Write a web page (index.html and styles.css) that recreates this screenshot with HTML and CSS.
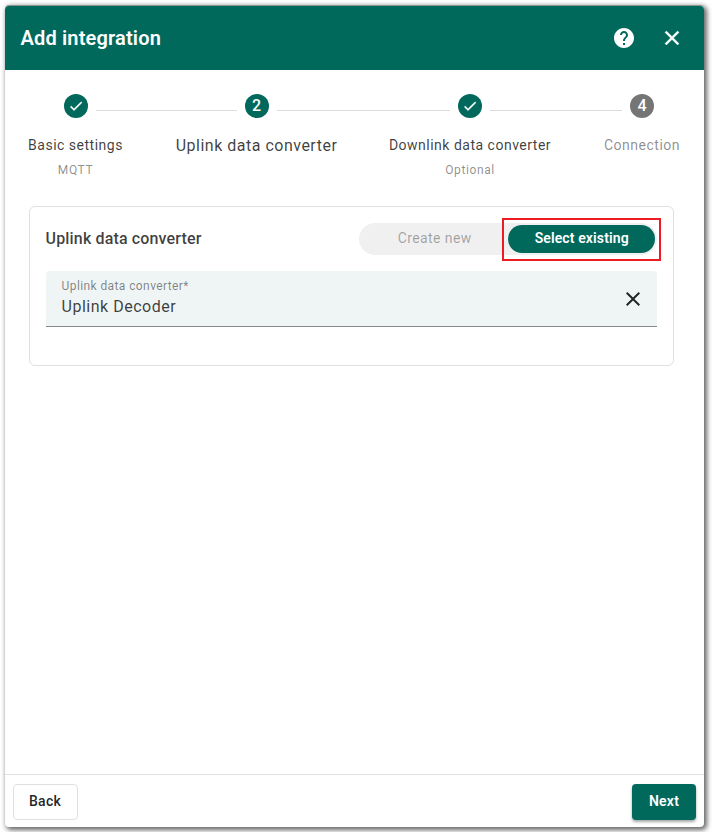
FILE: index.html
```html
<!DOCTYPE html>
<html lang="en">
<head>
<meta charset="utf-8">
<title>Add integration</title>
<link rel="stylesheet" href="styles.css">
</head>
<body>
<main class="dialog">
  <header class="toolbar">
    <h1 class="title">Add integration</h1>
    <svg class="icon help" viewBox="0 0 24 24"><path d="M12 2C6.48 2 2 6.48 2 12s4.48 10 10 10 10-4.48 10-10S17.52 2 12 2zm1 17h-2v-2h2v2zm2.07-7.75l-.9.92C13.45 12.9 13 13.5 13 15h-2v-.5c0-1.1.45-2.1 1.17-2.83l1.24-1.26c.37-.36.59-.86.59-1.41 0-1.1-.9-2-2-2s-2 .9-2 2H8c0-2.21 1.79-4 4-4s4 1.79 4 4c0 .88-.36 1.68-.93 2.25z"/></svg>
    <svg class="icon close" viewBox="0 0 24 24"><path d="M19 6.41L17.59 5 12 10.59 6.41 5 5 6.41 10.59 12 5 17.59 6.41 19 12 13.41 17.59 19 19 17.59 13.41 12z"/></svg>
  </header>
  <section class="content">
    <div class="stepper">
      <div class="step">
        <span class="dot"><svg viewBox="0 0 24 24"><path d="M9 16.17L4.83 12l-1.42 1.41L9 19 21 7l-1.41-1.41z"/></svg></span>
        <span class="label">Basic settings</span>
        <span class="hint">MQTT</span>
      </div>
      <i class="line line-first"></i>
      <div class="step">
        <span class="dot">2</span>
        <span class="label label-active">Uplink data converter</span>
      </div>
      <i class="line line-second"></i>
      <div class="step">
        <span class="dot"><svg viewBox="0 0 24 24"><path d="M9 16.17L4.83 12l-1.42 1.41L9 19 21 7l-1.41-1.41z"/></svg></span>
        <span class="label">Downlink data converter</span>
        <span class="hint">Optional</span>
      </div>
      <i class="line line-third"></i>
      <div class="step">
        <span class="dot dot-pending">4</span>
        <span class="label label-pending">Connection</span>
      </div>
    </div>
    <div class="panel">
      <div class="panel-head">
        <h2 class="panel-title">Uplink data converter</h2>
        <div class="toggle">
          <span class="option">Create new</span>
          <span class="option option-selected">Select existing</span>
          <span class="highlight"></span>
        </div>
      </div>
      <div class="field">
        <div class="field-text">
          <span class="field-label">Uplink data converter*</span>
          <span class="field-value">Uplink Decoder</span>
        </div>
        <svg class="icon clear" viewBox="0 0 24 24"><path d="M19 6.41L17.59 5 12 10.59 6.41 5 5 6.41 10.59 12 5 17.59 6.41 19 12 13.41 17.59 19 19 17.59 13.41 12z"/></svg>
      </div>
    </div>
  </section>
  <footer class="actions">
    <button class="button">Back</button>
    <button class="button button-primary">Next</button>
  </footer>
</main>
</body>
</html>
```
FILE: styles.css
```css
* { box-sizing: border-box; }
body {
  margin: 0;
  padding: 5px;
  background: #fff;
  font-family: Roboto, "Liberation Sans", sans-serif;
  color: rgba(0, 0, 0, .76);
}
.dialog {
  display: flex;
  flex-direction: column;
  width: 699px;
  height: 822px;
  border-top: 1px solid #8d9794;
  border-radius: 4px;
  background: #fff;
  box-shadow: 2px 2px 5px 1px rgba(0, 0, 0, .6);
}
.toolbar {
  display: flex;
  align-items: center;
  flex: none;
  height: 64px;
  padding: 0 20px 0 15.5px;
  border-radius: 4px 4px 0 0;
  background: #00695c;
  color: #fff;
}
.title { flex: 1; margin: 0; font-size: 20px; font-weight: 600; line-height: 32px; letter-spacing: .16px; }
.icon { width: 24px; height: 24px; fill: currentColor; }
.help { margin-right: 24px; }
.close { stroke: currentColor; stroke-width: .4; }
.content { flex: 1; padding: 24px; }
.stepper { display: flex; height: 112px; padding: 0 26px 0 34.5px; }
.step {
  display: flex;
  flex-direction: column;
  align-items: center;
  flex: none;
  width: 24px;
  white-space: nowrap;
}
.dot {
  display: flex;
  align-items: center;
  justify-content: center;
  width: 24px;
  height: 24px;
  border-radius: 50%;
  background: #00695c;
  color: #fff;
  font-size: 16px;
  font-weight: 500;
  line-height: 22px;
  padding-bottom: 1px;
}
.dot svg { width: 16px; height: 16px; margin-top: 1px; fill: currentColor; stroke: currentColor; stroke-width: .5; }
.dot-pending { background: #757575; }
.label { margin-top: 17px; font-size: 14px; line-height: 20px; letter-spacing: .5px; }
.label-active { margin-top: 18px; font-size: 16px; letter-spacing: .5px; }
.label-pending { color: rgba(0, 0, 0, .46); }
.hint { margin-top: 7px; font-size: 12px; line-height: 16px; letter-spacing: .6px; color: rgba(0, 0, 0, .46); }
.line { height: 1px; margin: 16px 8px 0; background: #dcdcdc; }
.line-first { flex: 141 0 0; }
.line-second { flex: 173.5 0 0; }
.line-third { flex: 132 0 0; }
.panel {
  width: 645.6px;
  height: 160px;
  margin-left: -.4px;
  padding: 16px;
  border: 1px solid #e0e0e0;
  border-radius: 6px;
}
.panel-head { display: flex; align-items: center; justify-content: space-between; height: 32px; margin-bottom: 16px; }
.panel-title { margin: 0 0 2px; font-size: 16px; font-weight: 500; letter-spacing: .15px; }
.toggle {
  position: relative;
  display: flex;
  width: 298px;
  height: 32px;
  padding: 2px;
  border-radius: 16px;
  background: #f0f0f0;
}
.option {
  width: 147px;
  border-radius: 14px;
  color: rgba(0, 0, 0, .34);
  font-size: 14px;
  line-height: 26px;
  letter-spacing: .4px;
  text-align: center;
}
.option-selected { background: #00695c; color: #fff; font-weight: 600; letter-spacing: .12px; }
.highlight { position: absolute; top: -5px; right: -4px; width: 159px; height: 43px; border: 2px solid #ed1c24; }
.field {
  display: flex;
  align-items: center;
  height: 56px;
  padding: 0 12px 0 16px;
  border-bottom: 1px solid #868a89;
  border-radius: 4px 4px 0 0;
  background: #eff5f5;
}
.field-text { display: flex; flex: 1; flex-direction: column; }
.field-label { font-size: 12px; line-height: 17px; letter-spacing: .4px; color: rgba(0, 0, 0, .48); }
.field-value { font-size: 16px; line-height: 24px; letter-spacing: .5px; }
.clear { color: rgba(0, 0, 0, .85); }
.actions {
  display: flex;
  justify-content: space-between;
  flex: none;
  height: 53px;
  padding: 9px 8px 8px;
  border-top: 1px solid #e0e0e0;
}
.button {
  width: 65px;
  height: 36px;
  padding: 0 1px 2px 0;
  border: 1px solid #e0e0e0;
  border-radius: 4px;
  background: #fff;
  color: rgba(0, 0, 0, .87);
  font: 500 14px Roboto, "Liberation Sans", sans-serif;
  letter-spacing: .25px;
}
.button-primary {
  width: 64px;
  padding-right: 0;
  border: 0;
  background: #00695c;
  color: #fff;
  font-weight: 600;
  box-shadow: 0 2px 3px rgba(0, 0, 0, .35);
}
```
